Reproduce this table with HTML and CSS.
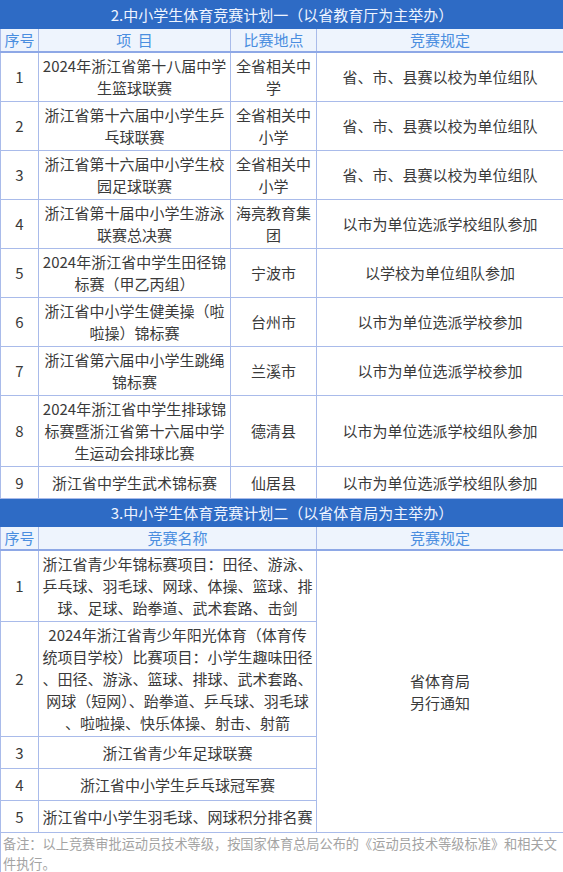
FILE: index.html
```html
<!DOCTYPE html>
<html lang="zh-CN">
<head>
<meta charset="utf-8">
<title>中小学生体育竞赛计划</title>
<link rel="stylesheet" href="styles.css">
</head>
<body>
<table class="plan">
  <colgroup>
    <col class="c-no">
    <col class="c-name">
    <col class="c-place">
    <col class="c-rule">
  </colgroup>
  <tbody>
    <tr class="title"><th colspan="4">2.中小学生体育竞赛计划一（以省教育厅为主举办）</th></tr>
    <tr class="head"><th>序号</th><th>项&nbsp;&nbsp;目</th><th>比赛地点</th><th>竞赛规定</th></tr>
    <tr><td>1</td><td>2024年浙江省第十八届中学<br>生篮球联赛</td><td>全省相关中<br>学</td><td>省、市、县赛以校为单位组队</td></tr>
    <tr><td>2</td><td>浙江省第十六届中小学生乒<br>乓球联赛</td><td>全省相关中<br>小学</td><td>省、市、县赛以校为单位组队</td></tr>
    <tr><td>3</td><td>浙江省第十六届中小学生校<br>园足球联赛</td><td>全省相关中<br>小学</td><td>省、市、县赛以校为单位组队</td></tr>
    <tr><td>4</td><td>浙江省第十届中小学生游泳<br>联赛总决赛</td><td>海亮教育集<br>团</td><td>以市为单位选派学校组队参加</td></tr>
    <tr><td>5</td><td>2024年浙江省中学生田径锦<br>标赛（甲乙丙组）</td><td>宁波市</td><td>以学校为单位组队参加</td></tr>
    <tr><td>6</td><td>浙江省中小学生健美操（啦<br>啦操）锦标赛</td><td>台州市</td><td>以市为单位选派学校参加</td></tr>
    <tr><td>7</td><td>浙江省第六届中小学生跳绳<br>锦标赛</td><td>兰溪市</td><td>以市为单位选派学校参加</td></tr>
    <tr><td>8</td><td>2024年浙江省中学生排球锦<br>标赛暨浙江省第十六届中学<br>生运动会排球比赛</td><td>德清县</td><td>以市为单位选派学校组队参加</td></tr>
    <tr><td>9</td><td>浙江省中学生武术锦标赛</td><td>仙居县</td><td>以市为单位选派学校组队参加</td></tr>
    <tr class="title"><th colspan="4">3.中小学生体育竞赛计划二（以省体育局为主举办）</th></tr>
    <tr class="head"><th>序号</th><th colspan="2">竞赛名称</th><th>竞赛规定</th></tr>
    <tr><td>1</td><td colspan="2">浙江省青少年锦标赛项目：田径、游泳、<br>乒乓球、羽毛球、网球、体操、篮球、排<br>球、足球、跆拳道、武术套路、击剑</td><td rowspan="5">省体育局<br>另行通知</td></tr>
    <tr><td>2</td><td colspan="2">2024年浙江省青少年阳光体育（体育传<br>统项目学校）比赛项目：小学生趣味田径<br>、田径、游泳、篮球、排球、武术套路、<br>网球（短网）、跆拳道、乒乓球、羽毛球<br>、啦啦操、快乐体操、射击、射箭</td></tr>
    <tr><td>3</td><td colspan="2">浙江省青少年足球联赛</td></tr>
    <tr><td>4</td><td colspan="2">浙江省中小学生乒乓球冠军赛</td></tr>
    <tr><td>5</td><td colspan="2">浙江省中小学生羽毛球、网球积分排名赛</td></tr>
    <tr class="note"><td colspan="4">备注：以上竞赛审批运动员技术等级，按国家体育总局公布的《运动员技术等级标准》和相关文<br>件执行。</td></tr>
  </tbody>
</table>
</body>
</html>
```

FILE: styles.css
```css
html, body {
  margin: 0;
  padding: 0;
  background: #ffffff;
}

body {
  font-family: "Noto Sans CJK SC", "Noto Sans", sans-serif;
  font-size: 15px;
  color: #3a3a3a;
  width: 563px;
}

.plan {
  width: 563px;
  border-collapse: collapse;
  table-layout: fixed;
}

.c-no { width: 38px; }
.c-name { width: 192px; }
.c-place { width: 86px; }
.c-rule { width: 247px; }

.plan td,
.plan th {
  border: 1px solid #a9bbea;
  text-align: center;
  vertical-align: middle;
  font-weight: normal;
  line-height: 22px;
  padding: 2px 2px;
  white-space: nowrap;
}

.plan td {
  height: 27px;
}

.title th {
  background: #2e6bc5;
  color: #eef4ff;
  height: 27px;
  padding: 0;
  font-size: 15px;
  border-color: #2e6bc5 #6d8fdc #2e6bc5 #2e6bc5;
}

.head th {
  background: #eef4fd;
  color: #4a8ee0;
  height: 20px;
  padding: 0 2px;
  border-bottom: 2px solid #8ea8e6;
}

.note td {
  text-align: left;
  color: #a3a3a3;
  font-size: 13.2px;
  line-height: 20px;
  padding: 1px 2px;
  height: auto;
}
```
